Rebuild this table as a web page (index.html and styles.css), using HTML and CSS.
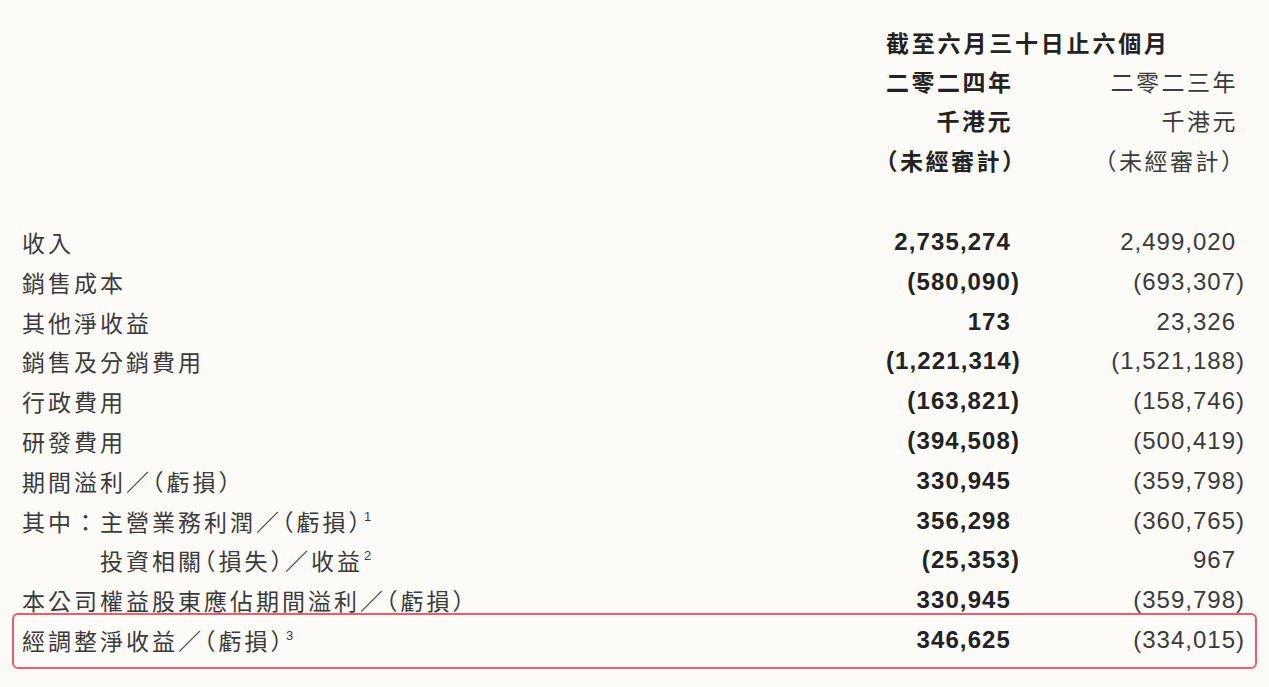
FILE: index.html
```html
<!DOCTYPE html>
<html lang="zh-Hant">
<head>
<meta charset="utf-8">
<title>截至六月三十日止六個月</title>
<link rel="stylesheet" href="styles.css">
</head>
<body>
<div class="sheet">
  <div class="head">
    <div class="row">
      <div class="label"></div>
      <div class="period">截至六月三十日止六個月</div>
    </div>
    <div class="row">
      <div class="label"></div>
      <div class="cur h">二零二四年</div>
      <div class="prev h">二零二三年</div>
    </div>
    <div class="row">
      <div class="label"></div>
      <div class="cur h">千港元</div>
      <div class="prev h">千港元</div>
    </div>
    <div class="row">
      <div class="label"></div>
      <div class="cur h paren"><span class="p">（</span>未經審計<span class="p">）</span></div>
      <div class="prev h paren"><span class="p">（</span>未經審計<span class="p">）</span></div>
    </div>
  </div>

  <div class="body">
    <div class="row"><div class="label">收入</div><div class="cur">2,735,274</div><div class="prev">2,499,020</div></div>
    <div class="row"><div class="label">銷售成本</div><div class="cur neg">(580,090)</div><div class="prev neg">(693,307)</div></div>
    <div class="row"><div class="label">其他淨收益</div><div class="cur">173</div><div class="prev">23,326</div></div>
    <div class="row"><div class="label">銷售及分銷費用</div><div class="cur neg">(1,221,314)</div><div class="prev neg">(1,521,188)</div></div>
    <div class="row"><div class="label">行政費用</div><div class="cur neg">(163,821)</div><div class="prev neg">(158,746)</div></div>
    <div class="row"><div class="label">研發費用</div><div class="cur neg">(394,508)</div><div class="prev neg">(500,419)</div></div>
    <div class="row"><div class="label">期間溢利／<span class="p">（</span>虧損<span class="p">）</span></div><div class="cur">330,945</div><div class="prev neg">(359,798)</div></div>
    <div class="row"><div class="label">其中：主營業務利潤／<span class="p">（</span>虧損<span class="p">）</span><sup>1</sup></div><div class="cur">356,298</div><div class="prev neg">(360,765)</div></div>
    <div class="row"><div class="label indent">投資相關<span class="p">（</span>損失<span class="p">）</span>／收益<sup>2</sup></div><div class="cur neg">(25,353)</div><div class="prev">967</div></div>
    <div class="row"><div class="label">本公司權益股東應佔期間溢利／<span class="p">（</span>虧損<span class="p">）</span></div><div class="cur">330,945</div><div class="prev neg">(359,798)</div></div>
    <div class="row highlight"><div class="label">經調整淨收益／<span class="p">（</span>虧損<span class="p">）</span><sup>3</sup></div><div class="cur">346,625</div><div class="prev neg">(334,015)</div></div>
  </div>
</div>
</body>
</html>
```

FILE: styles.css
```css
html, body {
  margin: 0;
  padding: 0;
  background: #fdfbf8;
}

body {
  font-family: "Liberation Sans", "Noto Sans CJK TC", sans-serif;
  font-size: 24px;
  color: #333;
}

.sheet {
  box-sizing: border-box;
  width: 1245px;
  padding: 22px 0 0 22px;
}

.row {
  display: grid;
  grid-template-columns: 1fr 134px 225px;
  align-items: center;
  height: 39.8px;
  white-space: nowrap;
}

.head .row {
  height: 39.3px;
}

.body {
  margin-top: 43px;
}

.label {
  font-family: "Noto Sans CJK TC", sans-serif;
  font-size: 23px;
  letter-spacing: 3px;
  color: #3a3a3a;
}

.p {
  font-feature-settings: "halt";
}

.indent {
  padding-left: 78px;
}

.period {
  grid-column: 2 / 4;
  font-family: "Noto Sans CJK TC", sans-serif;
  font-size: 23px;
  letter-spacing: 2.8px;
  font-weight: 700;
  color: #222;
}

.cur,
.prev {
  text-align: right;
  letter-spacing: 1px;
  padding-right: 9px;
}

.cur {
  font-weight: 700;
  color: #222;
  letter-spacing: 1.1px;
}

.prev {
  color: #3a3a3a;
}

.cur.neg,
.prev.neg {
  padding-right: 0;
}

.h {
  font-family: "Noto Sans CJK TC", sans-serif;
  font-size: 23px;
  letter-spacing: 2.5px;
  padding-right: 7px;
}

.cur.h {
  letter-spacing: 2.5px;
}

.cur.h.paren {
  padding-right: 10px;
}

.prev.h.paren {
  padding-right: 10px;
}

sup {
  font-family: "Liberation Sans", sans-serif;
  font-size: 13px;
  line-height: 0;
  vertical-align: 10px;
  letter-spacing: 0;
  margin-left: 1px;
}

.highlight {
  height: 39.8px;
  margin: -7px -12px 0 -10px;
  padding: 5px 10px 7px 8px;
  border: 2px solid #f25a6e;
  border-radius: 6px;
  box-sizing: content-box;
}
```
